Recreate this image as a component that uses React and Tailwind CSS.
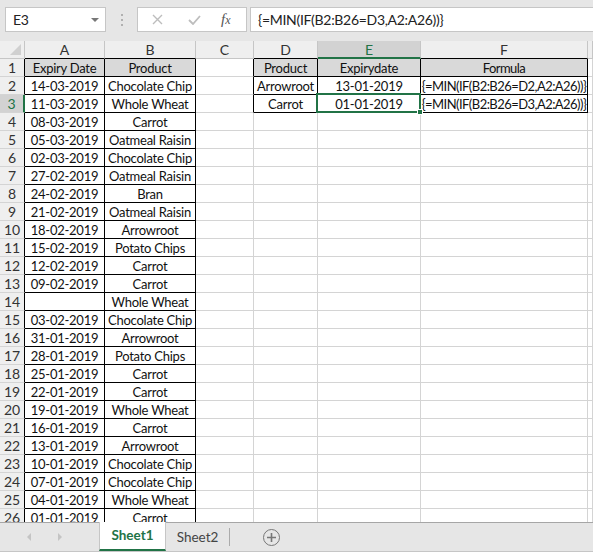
import React from "react"

const font = { fontFamily: "Lato, 'Open Sans', sans-serif" }

const colLetters = ["A", "B", "C", "D", "E", "F", ""]

const dataRows = [
  ["Expiry Date", "Product", "", "Product", "Expirydate", "Formula"],
  ["14-03-2019", "Chocolate Chip", "", "Arrowroot", "13-01-2019", "{=MIN(IF(B2:B26=D2,A2:A26))}"],
  ["11-03-2019", "Whole Wheat", "", "Carrot", "01-01-2019", "{=MIN(IF(B2:B26=D3,A2:A26))}"],
  ["08-03-2019", "Carrot"],
  ["05-03-2019", "Oatmeal Raisin"],
  ["02-03-2019", "Chocolate Chip"],
  ["27-02-2019", "Oatmeal Raisin"],
  ["24-02-2019", "Bran"],
  ["21-02-2019", "Oatmeal Raisin"],
  ["18-02-2019", "Arrowroot"],
  ["15-02-2019", "Potato Chips"],
  ["12-02-2019", "Carrot"],
  ["09-02-2019", "Carrot"],
  ["", "Whole Wheat"],
  ["03-02-2019", "Chocolate Chip"],
  ["31-01-2019", "Arrowroot"],
  ["28-01-2019", "Potato Chips"],
  ["25-01-2019", "Carrot"],
  ["22-01-2019", "Carrot"],
  ["19-01-2019", "Whole Wheat"],
  ["16-01-2019", "Carrot"],
  ["13-01-2019", "Arrowroot"],
  ["10-01-2019", "Chocolate Chip"],
  ["07-01-2019", "Chocolate Chip"],
  ["04-01-2019", "Whole Wheat"],
  ["01-01-2019", "Carrot"],
]

// bordered ranges: A1:B26 and D1:F3
const inRegion = (r, c) =>
  (r >= 1 && r <= 26 && c >= 1 && c <= 2) || (r >= 1 && r <= 3 && c >= 4 && c <= 6)

function Cell({ r, c, text }) {
  const right = inRegion(r, c) || inRegion(r, c + 1) ? "border-r-black" : "border-r-[#d4d4d4]"
  const bottom = inRegion(r, c) || inRegion(r + 1, c) ? "border-b-black" : "border-b-[#d4d4d4]"
  const fill = r === 1 && inRegion(r, c) ? "bg-[#d9d9d9]" : "bg-white"
  const selected = r === 3 && c === 5
  return (
    <div
      className={`relative flex items-center justify-center whitespace-nowrap border-r border-b pt-[2px] text-[13px] leading-none text-[#111] ${right} ${bottom} ${fill}`}
    >
      <span className={c === 6 ? "tracking-[-0.55px]" : "tracking-[-0.25px]"}>{text}</span>
      {selected && (
        <div className="absolute -left-[2px] -top-[2px] z-10 h-[calc(100%+3px)] w-[calc(100%+3px)] border-2 border-[#217346]">
          <div className="absolute -bottom-[4px] -right-[4px] h-[6px] w-[6px] border border-white bg-[#217346]" />
        </div>
      )}
    </div>
  )
}

function FormulaBar() {
  return (
    <div className="relative h-[41px] shrink-0 bg-[#e6e6e6]">
      <div className="absolute left-[5px] top-[7px] flex h-[25px] w-[101px] items-center justify-between border border-[#c6c6c6] bg-white pl-[7px] pr-[6px] text-[14px] tracking-[-0.3px] text-[#222]">
        <span>E3</span>
        <div className="h-0 w-0 border-x-[4px] border-t-[4px] border-x-transparent border-t-[#777]" />
      </div>
      <div className="absolute left-[121px] top-[14px] flex flex-col gap-[3px]">
        <div className="h-[2px] w-[2px] bg-[#b0b0b0]" />
        <div className="h-[2px] w-[2px] bg-[#b0b0b0]" />
        <div className="h-[2px] w-[2px] bg-[#b0b0b0]" />
      </div>
      <div className="absolute left-[137px] top-[7px] flex h-[25px] w-[110px] items-center border border-[#c6c6c6] bg-white">
        <svg className="ml-[14px]" width="11" height="11" viewBox="0 0 11 11">
          <path d="M1 1L10 10M10 1L1 10" stroke="#bdbdbd" strokeWidth="1.4" />
        </svg>
        <svg className="ml-[25px]" width="13" height="10" viewBox="0 0 13 10">
          <path d="M1 5L5 9L12 1" stroke="#bdbdbd" strokeWidth="1.8" fill="none" />
        </svg>
        <span
          className="ml-[20px] text-[15px] italic text-[#555]"
          style={{ fontFamily: "'Liberation Serif', serif" }}
        >
          f<span className="text-[12px]">x</span>
        </span>
      </div>
      <div className="absolute left-[250px] right-0 top-[7px] flex h-[25px] items-center border border-r-0 border-[#c6c6c6] bg-white pl-[7px] text-[14px] tracking-[-0.3px] text-[#222]">
        {"{=MIN(IF(B2:B26=D3,A2:A26))}"}
      </div>
    </div>
  )
}

function Grid() {
  const rows = []
  for (let r = 1; r <= 26; r++) {
    const d = dataRows[r - 1]
    rows.push(
      <div
        key={`h${r}`}
        className={`flex items-center justify-center border-b border-b-[#d4d4d4] pt-[1px] text-[14px] leading-none ${
          r === 3
            ? "border-r-2 border-r-[#217346] bg-[#d2d2d2] text-[#217346]"
            : "border-r border-r-black bg-[#efefef] text-[#333]"
        }`}
      >
        {r}
      </div>
    )
    for (let c = 1; c <= 7; c++) {
      rows.push(<Cell key={`${r}-${c}`} r={r} c={c} text={d[c - 1] || ""} />)
    }
  }
  return (
    <div className="min-h-0 flex-1 overflow-hidden bg-white">
      <div className="grid auto-rows-[18px] grid-cols-[25px_80px_91px_58px_64px_103px_167px_1fr]">
        <div className="relative border-r border-b border-[#c6c6c6] bg-[#efefef]">
          <svg className="absolute bottom-[3px] right-[3px]" width="11" height="11" viewBox="0 0 11 11">
            <path d="M11 0L11 11L0 11Z" fill="#d0d0d0" />
          </svg>
        </div>
        {colLetters.map((l, i) => {
          const c = i + 1
          const sel = c === 5
          const bottom = sel
            ? "border-b-2 border-b-[#217346]"
            : inRegion(1, c)
            ? "border-b border-b-black"
            : "border-b border-b-[#c6c6c6]"
          return (
            <div
              key={`c${c}`}
              className={`flex items-center justify-center border-r border-r-[#c6c6c6] pt-[1px] text-[14px] leading-none ${bottom} ${
                sel ? "bg-[#d2d2d2] text-[#217346]" : "bg-[#efefef] text-[#333]"
              }`}
            >
              {l}
            </div>
          )
        })}
        {rows}
      </div>
    </div>
  )
}

function TabBar() {
  return (
    <div className="flex h-[29px] shrink-0 border-t border-[#a6a6a6] bg-[#e6e6e6] text-[13.5px]">
      <div className="flex w-[99px] items-center">
        <div className="ml-[27px] h-0 w-0 border-y-[4px] border-r-[4px] border-y-transparent border-r-[#c4c4c4]" />
        <div className="ml-[27px] h-0 w-0 border-y-[4px] border-l-[4px] border-y-transparent border-l-[#c4c4c4]" />
      </div>
      <div className="-mt-px flex w-[67px] items-center justify-center border-x border-[#c6c6c6] border-b-2 border-b-[#217346] bg-white pb-[1px] font-bold text-[#217346]">
        Sheet1
      </div>
      <div className="flex w-[63px] items-center justify-center text-[#444]">Sheet2</div>
      <div className="my-[5px] w-px bg-[#ababab]" />
      <div className="ml-[33px] flex items-center">
        <div className="flex h-[17px] w-[17px] items-center justify-center rounded-full border-[1.5px] border-[#777]">
          <svg width="9" height="9" viewBox="0 0 9 9">
            <path d="M4.5 0V9M0 4.5H9" stroke="#777" strokeWidth="1.6" />
          </svg>
        </div>
      </div>
    </div>
  )
}

export default function App() {
  return (
    <div className="flex h-[552px] w-[593px] flex-col overflow-hidden border-b border-[#c6c6c6]" style={font}>
      <FormulaBar />
      <Grid />
      <TabBar />
    </div>
  )
}
